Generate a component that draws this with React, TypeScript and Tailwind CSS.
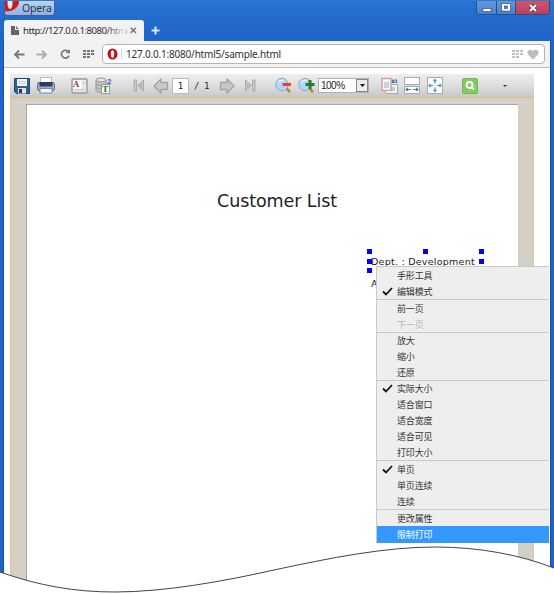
import type { ReactNode } from 'react';

type MenuItem = { label: string; checked?: boolean; disabled?: boolean };

const menuGroups: { height: string; items: MenuItem[] }[] = [
  { height: 'h-[32px]', items: [{ label: '手形工具' }, { label: '编辑模式', checked: true }] },
  { height: 'h-[32px]', items: [{ label: '前一页' }, { label: '下一页', disabled: true }] },
  { height: 'h-[47px]', items: [{ label: '放大' }, { label: '缩小' }, { label: '还原' }] },
  {
    height: 'h-[79px]',
    items: [
      { label: '实际大小', checked: true },
      { label: '适合窗口' },
      { label: '适合宽度' },
      { label: '适合可见' },
      { label: '打印大小' },
    ],
  },
  { height: 'h-[48px]', items: [{ label: '单页', checked: true }, { label: '单页连续' }, { label: '连续' }] },
  { height: 'h-[16px]', items: [{ label: '更改属性' }] },
];

function Icon({ w = 18, h = 18, className = '', children }: { w?: number; h?: number; className?: string; children: ReactNode }) {
  return (
    <svg width={w} height={h} viewBox={`0 0 ${w} ${h}`} fill="none" className={`block shrink-0 ${className}`}>
      {children}
    </svg>
  );
}

function GridIcon({ color, className = '' }: { color: string; className?: string }) {
  return (
    <Icon w={11} h={9} className={className}>
      {[0, 1, 2].map((r) =>
        [0, 1, 2].map((c) =>
          r === 2 && c === 2 ? null : <rect key={`${r}${c}`} x={c * 4} y={r * 3} width="3" height="2" fill={color} />,
        ),
      )}
    </Icon>
  );
}

function TitleBar() {
  return (
    <div className="flex h-5 shrink-0 items-start justify-between border-t border-[#2a7fc4] bg-gradient-to-b from-[#2c72d2] to-[#246acb]">
      <div className="ml-1 flex h-[15px] w-[51px] items-center rounded-b-[3px] border border-t-0 border-[#3a5f9b] bg-gradient-to-b from-[#bdd2ef] to-[#8fb0df]">
        <Icon w={15} h={12} className="self-start">
          <path d="M0 0H14C14 6 9 10.5 0 10.5Z" fill="#d01818" />
          <path d="M2.5 0H7.5C7.5 5 7 7.8 5 7.8C3 7.8 2.5 5 2.5 0Z" fill="#e9edf6" />
        </Icon>
        <span className="ml-[2px] text-[10.5px] leading-none tracking-[-0.2px] text-[#27364f]">Opera</span>
      </div>
      <div className="mr-1 flex h-[14px] w-[74px] overflow-hidden rounded-b-[3px] border border-t-0 border-[#23508f]">
        <div className="flex w-5 items-center justify-center border-r border-[#23508f] bg-gradient-to-b from-[#6595dc] to-[#4a80d2]">
          <Icon w={10} h={10}>
            <rect x="1" y="5.5" width="8" height="3" fill="#fff" stroke="#3a5277" strokeWidth=".7" />
          </Icon>
        </div>
        <div className="flex w-[19px] items-center justify-center border-r border-[#23508f] bg-gradient-to-b from-[#6595dc] to-[#4a80d2]">
          <Icon w={10} h={9}>
            <rect x=".5" y=".5" width="9" height="7.5" fill="#fff" stroke="#3a5277" strokeWidth=".7" />
            <rect x="3.5" y="3" width="3" height="2.4" fill="#4a80d2" stroke="#3a5277" strokeWidth=".7" />
          </Icon>
        </div>
        <div className="flex flex-1 items-center justify-center bg-gradient-to-b from-[#c95772] to-[#bf3d5a]">
          <Icon w={10} h={10}>
            <path d="M2 2L8 8M8 2L2 8" stroke="#5b3448" strokeWidth="3.4" />
            <path d="M2 2L8 8M8 2L2 8" stroke="#fff" strokeWidth="2" />
          </Icon>
        </div>
      </div>
    </div>
  );
}

function TabStrip() {
  return (
    <div className="flex h-[21px] shrink-0 bg-gradient-to-b from-[#246acb] to-[#1e64c9] px-1">
      <div className="flex w-[140px] items-center rounded-t-[3px] bg-[#f2f2f2]">
        <Icon w={8} h={9} className="ml-[7px]">
          <path d="M0 0H4V4H8V9H0Z" fill="#666" />
          <path d="M5 0L8 3H5Z" fill="#777" />
        </Icon>
        <div className="relative ml-[4px] w-[103px]">
          <span className="block text-[9.6px] leading-[16px] tracking-[-0.48px] whitespace-nowrap text-[#332b35]">http://127.0.0.1:8080/htm</span>
          <span className="absolute inset-y-0 right-0 w-[20px] bg-gradient-to-r from-[#f2f2f200] to-[#f2f2f2]" />
        </div>
        <Icon w={7} h={7} className="ml-[4px]">
          <path d="M.7 .7L6 6M6 .7L.7 6" stroke="#777" strokeWidth="1.5" />
        </Icon>
      </div>
      <Icon w={9} h={9} className="mt-[6px] ml-[7px]">
        <path d="M4.5 .5V8.5M.5 4.5H8.5" stroke="#d5e6ff" strokeWidth="2" />
      </Icon>
    </div>
  );
}

function AddressBar() {
  return (
    <div className="flex h-[27px] shrink-0 items-center border-b border-[#bcbcbc] bg-[#f2f2f2] pl-[10px]">
      <Icon w={11} h={9}>
        <path d="M5 .5L1 4.5L5 8.5M1 4.5H10.5" stroke="#73777b" strokeWidth="1.9" />
      </Icon>
      <Icon w={11} h={9} className="ml-[11px]">
        <path d="M6 .5L10 4.5L6 8.5M10 4.5H.5" stroke="#a9adb0" strokeWidth="1.9" />
      </Icon>
      <Icon w={11} h={10} className="ml-[13px]">
        <path d="M8.2 2.5A3.9 3.9 0 1 0 9 6.6" stroke="#777" strokeWidth="1.7" />
        <path d="M10 0V4.3H5.6Z" fill="#777" />
      </Icon>
      <GridIcon color="#777" className="ml-[12px]" />
      <div className="ml-[8px] flex h-5 w-[443px] items-center rounded-[4px] border border-[#b5b5b5] bg-white">
        <Icon w={11} h={12} className="ml-[4px]">
          <ellipse cx="5.5" cy="6" rx="5" ry="5.6" fill="#c80d19" />
          <ellipse cx="5.5" cy="6" rx="1.7" ry="3.8" fill="#fff" />
        </Icon>
        <span className="ml-[3px] h-3 border-l border-[#ddd]" />
        <span className="ml-[4px] flex-1 text-[10px] leading-[16px] tracking-[-0.2px] whitespace-nowrap text-[#303030]">127.0.0.1:8080/html5/sample.html</span>
        <GridIcon color="#c1c1c1" />
        <Icon w={12} h={11} className="mr-[5px] ml-[4px]">
          <path d="M6 10.5L1 5.5C-1 2 3-1 6 2C9-1 13 2 11 5.5Z" fill="#bdbdbd" />
        </Icon>
      </div>
    </div>
  );
}

function ZoomLens({ plus = false }: { plus?: boolean }) {
  return (
    <Icon w={17} h={17}>
      <path d="M10.5 10.5L15 15" stroke="#bb8238" strokeWidth="2.5" />
      <circle cx="7" cy="7.5" r="6.2" fill="#b1d7f6" stroke="#82acd0" />
      <path d="M3 5.5Q5 2.5 9 3.5" stroke="#e5f5ff" strokeWidth="1.5" />
      {plus ? <path d="M12 3V12M7.5 7.5H16.5" stroke="#237d2b" strokeWidth="3" /> : <path d="M7.5 7.5H16" stroke="#ed4126" strokeWidth="3" />}
    </Icon>
  );
}

function NavEdge({ last = false }: { last?: boolean }) {
  return (
    <Icon w={12} h={13} className={last ? '-scale-x-100' : ''}>
      <path d="M1 1H3.5V12H1ZM10.5 1V12L4.5 6.5ZM8.4 4.8L6.4 6.5L8.4 8.3Z" fill="#c9c9c9" fillRule="evenodd" stroke="#aaa" />
    </Icon>
  );
}

function NavArrow({ next = false }: { next?: boolean }) {
  return (
    <Icon w={16} h={16} className={next ? '-scale-x-100' : ''}>
      <path d="M8 1V4.5H14.5V11.5H8V15L1 8Z" fill="#c8c8c8" stroke="#a2a2a2" strokeWidth="1.3" strokeLinejoin="round" />
    </Icon>
  );
}

function ReportToolbar() {
  return (
    <div className="flex h-[24px] shrink-0 items-center border-b border-[#dfbd7c] bg-gradient-to-b from-[#eeeeee] via-[#dedede] to-[#c8c8c8] pl-[4px]">
      <Icon w={16} h={16}>
        <path d="M.5 .5H15.5V15.5H2.5L.5 13.5Z" fill="#355c8d" stroke="#244971" />
        <rect x="3" y="1" width="10" height="7" fill="#f2f5f8" />
        <path d="M4 3.5H12M4 5.5H12" stroke="#c5ced8" />
        <rect x="4" y="10" width="8" height="5.5" fill="#dde5ed" />
        <rect x="5" y="11" width="3" height="4" fill="#223b5c" />
      </Icon>
      <Icon w={18} h={17} className="ml-[7px]">
        <rect x="3.5" y=".5" width="11" height="6" fill="#fff" stroke="#b6bdc9" />
        <rect x=".5" y="5.5" width="17" height="8" rx="1.5" fill="#a5adba" stroke="#6c7686" />
        <rect x="2.5" y="5" width="13" height="4.5" fill="#2a3d66" />
        <rect x="3" y="11.5" width="12" height="4.5" fill="#f3f6fb" stroke="#6f88b6" />
      </Icon>
      <Icon w={17} h={16} className="ml-[16px]">
        <rect x="1" y="1" width="15" height="14" rx="1" fill="#e9e9e9" stroke="#999" strokeWidth="1.4" />
        <rect x="2.5" y="2.5" width="8" height="8" fill="#fff" />
        <text x="2" y="9" fontSize="8.5" fontWeight="bold" fontFamily="Liberation Serif, serif" fill="#803060">A</text>
        <path d="M11 5H14M3 12H14" stroke="#c5c5c5" />
      </Icon>
      <Icon w={18} h={18} className="ml-[7px]">
        <path d="M1 3V13C1 16 11 16 11 13V3" fill="#c4c4c4" stroke="#929292" />
        <ellipse cx="6" cy="3" rx="5" ry="2" fill="#e3e3e3" stroke="#929292" />
        <path d="M1 6.5C1 9 11 9 11 6.5M1 10C1 12.5 11 12.5 11 10" stroke="#999" />
        <rect x="6.5" y="7.5" width="8" height="9" fill="#f3fff3" stroke="#999" />
        <text x="7.2" y="15.2" fontSize="9" fontWeight="bold" fontFamily="Liberation Serif, serif" fill="#147423">T</text>
        <text x="12" y="7" fontSize="8" fontWeight="bold" fontFamily="Liberation Sans, sans-serif" fill="#3468cd">2</text>
      </Icon>
      <div className="ml-[20px]"><NavEdge /></div>
      <div className="ml-[8px]"><NavArrow /></div>
      <div className="ml-[3px] flex h-[16px] w-[17px] items-center justify-center border border-[#bababa] bg-white pt-[2px] font-['DejaVu_Sans_Mono',monospace] text-[9px] text-[#222]">1</div>
      <span className="ml-[5px] w-[18px] pt-[2px] font-['DejaVu_Sans_Mono',monospace] text-[9px] leading-none tracking-[-0.4px] whitespace-pre text-[#222]">/ 1</span>
      <div className="ml-[7px]"><NavArrow next /></div>
      <div className="ml-[9px]"><NavEdge last /></div>
      <div className="ml-[19px]"><ZoomLens /></div>
      <div className="ml-[6px]"><ZoomLens plus /></div>
      <div className="ml-[3px] flex h-[15px] w-[51px] items-center border border-[#b0b0b0] bg-white pl-[2px] font-['Liberation_Sans',sans-serif] text-[10px] leading-none text-[#222]">
        <span className="flex-1 tracking-[-0.5px]">100%</span>
        <span className="flex h-[13px] w-[12px] items-center justify-center border border-[#888] bg-[#ececec]">
          <Icon w={5} h={3}><path d="M0 0H5L2.5 3Z" fill="#111" /></Icon>
        </span>
      </div>
      <Icon w={18} h={18} className="ml-[12px]">
        <rect x="4.5" y="7.5" width="12" height="9" fill="#f4f4f4" stroke="#aaa" />
        <rect x="9" y="10" width="5" height="4" fill="#bccbd7" />
        <rect x="1" y="1.5" width="9" height="12" fill="#f6f6f6" stroke="#dc9b9b" strokeWidth="1.4" />
        <rect x="3" y="5" width="5" height="6" fill="#c3d4e1" />
        <path d="M11.5 2.5V5.5H14.5M12 5L13.5 3.2Q16.5 2 15.5 6" stroke="#5273b4" strokeWidth="1.2" />
      </Icon>
      <Icon w={17} h={17} className="ml-[5px]">
        <rect x=".5" y=".5" width="15" height="7" fill="#fff" stroke="#aaa" />
        <rect x=".5" y="9.5" width="15" height="7" fill="#fff" stroke="#aaa" />
        <path d="M2 12.5H7M4 11L2 12.5L4 14M9 12.5H14M12 11L14 12.5L12 14" stroke="#3489bc" strokeWidth="1.2" />
      </Icon>
      <Icon w={16} h={17} className="ml-[6px]">
        <rect x=".5" y=".5" width="15" height="16" fill="#fff" stroke="#aaa" />
        <path d="M8 6.5V2.5M6.5 4L8 2.5L9.5 4M8 10.5V14.5M6.5 13L8 14.5L9.5 13M6 8.5H2M3.5 7L2 8.5L3.5 10M10 8.5H14M12.5 7L14 8.5L12.5 10" stroke="#5093bc" strokeWidth="1.2" />
      </Icon>
      <Icon w={16} h={16} className="ml-[19px]">
        <rect x=".5" y=".5" width="15" height="15" rx="1.5" fill="#83cb63" stroke="#72b956" />
        <circle cx="7.5" cy="7" r="3" stroke="#fff" strokeWidth="1.8" />
        <path d="M9.5 9L12 11.5" stroke="#fff" strokeWidth="2" />
      </Icon>
      <Icon w={4} h={2} className="ml-[25px]"><path d="M0 0H4L2 2Z" fill="#333" /></Icon>
    </div>
  );
}

function Handle({ className }: { className: string }) {
  return <span className={`absolute h-[5px] w-[5px] bg-[#0000ff] ${className}`} />;
}

function ReportPage() {
  return (
    <div className="flex-1 border-x border-[#dfc891] bg-[#d4d0c8] pt-[6px] pr-[15px] pl-[15px]">
      <div className="relative h-full border-t border-l border-[#a5a5a2] bg-white font-['DejaVu_Sans',sans-serif] text-[#222]">
        <h1 className="pt-[86px] pl-[190px] text-[17.5px] leading-[20px] tracking-[-0.08px] whitespace-nowrap">Customer List</h1>
        <p className="mt-[44px] ml-[344px] text-[9.5px] leading-[14px] tracking-[0.25px] whitespace-nowrap">Dept. : Development</p>
        <p className="mt-[8px] ml-[344px] text-[9.5px] leading-[14px]">A</p>
        <Handle className="top-[144px] left-[340px]" />
        <Handle className="top-[144px] left-[396px]" />
        <Handle className="top-[144px] left-[452px]" />
        <Handle className="top-[154px] left-[340px]" />
        <Handle className="top-[154px] left-[452px]" />
        <Handle className="top-[163px] left-[340px]" />
      </div>
    </div>
  );
}

function ContextMenu() {
  return (
    <div className="absolute top-[266px] left-[376px] w-[173px] border-t border-l border-[#c9c9c9] bg-[#eeeeee] font-['Noto_Sans_CJK_SC',sans-serif] text-[9px] tracking-[-0.15px] text-[#333]">
      {menuGroups.map((group, i) => (
        <div key={i} className={`flex flex-col ${group.height} ${i < menuGroups.length - 1 ? 'box-content border-b border-[#c9c9c9]' : ''}`}>
          {group.items.map((item) => (
            <div key={item.label} className={`flex min-h-0 flex-1 items-center ${item.disabled ? 'text-[#b4b4b4]' : ''}`}>
              <span className="flex w-[20px] justify-center">
                {item.checked && (
                  <Icon w={11} h={9}><path d="M1 4.5L4 7.5L10 1" stroke="#111" strokeWidth="1.8" /></Icon>
                )}
              </span>
              <span className="pt-px leading-[16px] whitespace-nowrap">{item.label}</span>
            </div>
          ))}
        </div>
      ))}
      <div className="flex h-[17px] items-center bg-[#3399ff] pl-[20px] leading-[16px] text-white">限制打印</div>
    </div>
  );
}

export default function App() {
  return (
    <div className="relative flex h-[594px] w-[554px] flex-col overflow-hidden bg-[#1e64c9] font-['Noto_Sans',sans-serif]">
      <TitleBar />
      <TabStrip />
      <div className="flex min-h-0 flex-1 flex-col px-[3px]">
        <div className="flex min-h-0 flex-1 flex-col border-x border-[#174fa8] bg-white">
          <AddressBar />
          <div className="flex min-h-0 flex-1 flex-col pt-[6px] pr-[16px] pl-[6px]">
            <ReportToolbar />
            <ReportPage />
          </div>
        </div>
      </div>
      <ContextMenu />
      <svg width="554" height="54" viewBox="0 540 554 54" className="absolute bottom-0 left-0">
        <path d="M0 572C40 586 75 592 115 592C165 592 225 581 274 570C330 558 385 547 435 547C480 547 520 555 554 568V596H0Z" fill="#fff" />
        <path d="M0 572C40 586 75 592 115 592C165 592 225 581 274 570C330 558 385 547 435 547C480 547 520 555 554 568" fill="none" stroke="#444" />
      </svg>
    </div>
  );
}
